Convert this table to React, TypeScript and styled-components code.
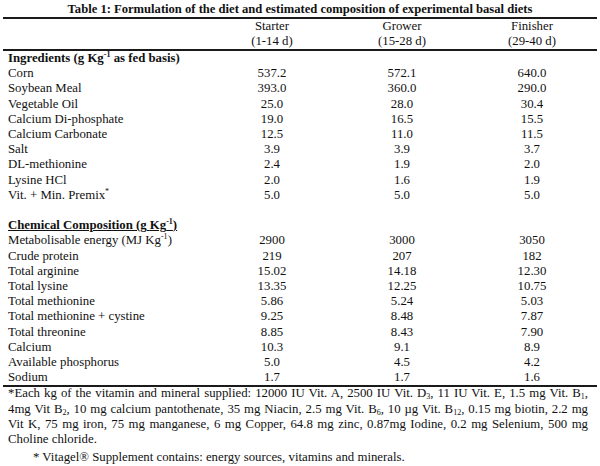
import React from "react";
import styled, { createGlobalStyle } from "styled-components";

const Global = createGlobalStyle`
  html, body { margin: 0; padding: 0; background: #fff; }
  body { font-family: "Liberation Serif", "Times New Roman", serif; color: #111; }
`;

const Page = styled.div`
  width: 600px;
  height: 466px;
  padding: 0 3px;
  box-sizing: border-box;
  overflow: hidden;
  font-family: "Liberation Serif", "Times New Roman", serif;
`;

const Title = styled.div`
  font-weight: bold;
  font-size: 12.6px;
  line-height: 16px;
  text-align: center;
  padding-top: 1px;
`;

const Table = styled.table`
  width: 594px;
  border-collapse: collapse;
  table-layout: fixed;
  font-family: "Liberation Serif", "Times New Roman", serif;
  font-size: 12.8px;
  border-top: 2px solid #1a1a1a;
  border-bottom: 2px solid #1a1a1a;
`;

const HeadRow = styled.tr<{ $last?: boolean }>`
  border-bottom: ${(p) => (p.$last ? "2px solid #1a1a1a" : "none")};
`;

const HeadCell = styled.th`
  font-weight: normal;
  text-align: center;
  line-height: 15px;
  height: 15px;
  padding: 0;
`;

const LabelCell = styled.td<{ $bold?: boolean; $underline?: boolean }>`
  padding: 0 0 0 5px;
  line-height: 15.2px;
  height: 15.2px;
  font-weight: ${(p) => (p.$bold ? "bold" : "normal")};
  text-decoration: ${(p) => (p.$underline ? "underline" : "none")};
  white-space: nowrap;
`;

const ValueCell = styled.td`
  padding: 0;
  line-height: 15.2px;
  text-align: center;
`;

const Sup = styled.sup`
  font-size: 8px;
  line-height: 0;
  vertical-align: 5px;
`;

const Sub = styled.sub`
  font-size: 8px;
  line-height: 0;
  vertical-align: -2px;
`;

const Notes = styled.div`
  font-size: 12.8px;
  padding: 0 9px 0 5px;
  margin-top: -1px;
`;

const NoteLine = styled.div<{ $justify?: boolean; $indent?: number; $gap?: number }>`
  line-height: 15.3px;
  height: 15.3px;
  text-align: left;
  text-align-last: ${(p) => (p.$justify ? "justify" : "left")};
  padding-left: ${(p) => p.$indent ?? 0}px;
  margin-top: ${(p) => p.$gap ?? 0}px;
  white-space: nowrap;
`;

const KgInv = () => (
  <>
    Kg<Sup>-1</Sup>
  </>
);

type Row =
  | { label: React.ReactNode; v: [string, string, string] }
  | { section: React.ReactNode; underline?: boolean }
  | { blank: true };

const rows: Row[] = [
  { section: <>Ingredients (g <KgInv /> as fed basis)</> },
  { label: "Corn", v: ["537.2", "572.1", "640.0"] },
  { label: "Soybean Meal", v: ["393.0", "360.0", "290.0"] },
  { label: "Vegetable Oil", v: ["25.0", "28.0", "30.4"] },
  { label: "Calcium Di-phosphate", v: ["19.0", "16.5", "15.5"] },
  { label: "Calcium Carbonate", v: ["12.5", "11.0", "11.5"] },
  { label: "Salt", v: ["3.9", "3.9", "3.7"] },
  { label: "DL-methionine", v: ["2.4", "1.9", "2.0"] },
  { label: "Lysine HCl", v: ["2.0", "1.6", "1.9"] },
  { label: <>Vit. + Min. Premix<Sup>*</Sup></>, v: ["5.0", "5.0", "5.0"] },
  { blank: true },
  { section: <>Chemical Composition (g <KgInv />)</>, underline: true },
  { label: <>Metabolisable energy (MJ <KgInv />)</>, v: ["2900", "3000", "3050"] },
  { label: "Crude protein", v: ["219", "207", "182"] },
  { label: "Total arginine", v: ["15.02", "14.18", "12.30"] },
  { label: "Total lysine", v: ["13.35", "12.25", "10.75"] },
  { label: "Total methionine", v: ["5.86", "5.24", "5.03"] },
  { label: "Total methionine + cystine", v: ["9.25", "8.48", "7.87"] },
  { label: "Total threonine", v: ["8.85", "8.43", "7.90"] },
  { label: "Calcium", v: ["10.3", "9.1", "8.9"] },
  { label: "Available phosphorus", v: ["5.0", "4.5", "4.2"] },
  { label: "Sodium", v: ["1.7", "1.7", "1.6"] },
];

export default function App() {
  return (
    <Page>
      <Global />
      <Title>Table 1: Formulation of the diet and estimated composition of experimental basal diets</Title>
      <Table>
        <colgroup>
          <col style={{ width: 204 }} />
          <col style={{ width: 130 }} />
          <col style={{ width: 130 }} />
          <col style={{ width: 130 }} />
        </colgroup>
        <thead>
          <HeadRow>
            <HeadCell />
            <HeadCell>Starter</HeadCell>
            <HeadCell>Grower</HeadCell>
            <HeadCell>Finisher</HeadCell>
          </HeadRow>
          <HeadRow $last>
            <HeadCell />
            <HeadCell>(1-14 d)</HeadCell>
            <HeadCell>(15-28 d)</HeadCell>
            <HeadCell>(29-40 d)</HeadCell>
          </HeadRow>
        </thead>
        <tbody>
          {rows.map((r, i) => {
            if ("blank" in r)
              return (
                <tr key={i}>
                  <LabelCell>&nbsp;</LabelCell>
                  <ValueCell />
                  <ValueCell />
                  <ValueCell />
                </tr>
              );
            if ("section" in r)
              return (
                <tr key={i}>
                  <LabelCell $bold $underline={r.underline}>{r.section}</LabelCell>
                  <ValueCell />
                  <ValueCell />
                  <ValueCell />
                </tr>
              );
            return (
              <tr key={i}>
                <LabelCell>{r.label}</LabelCell>
                {r.v.map((v, j) => (
                  <ValueCell key={j}>{v}</ValueCell>
                ))}
              </tr>
            );
          })}
        </tbody>
      </Table>
      <Notes>
        <NoteLine $justify>
          *Each kg of the vitamin and mineral supplied: 12000 IU Vit. A, 2500 IU Vit. D<Sub>3</Sub>, 11 IU Vit. E, 1.5 mg Vit. B<Sub>1</Sub>,
        </NoteLine>
        <NoteLine $justify>
          4mg Vit B<Sub>2</Sub>, 10 mg calcium pantothenate, 35 mg Niacin, 2.5 mg Vit. B<Sub>6</Sub>, 10 µg Vit. B<Sub>12</Sub>, 0.15 mg biotin, 2.2 mg
        </NoteLine>
        <NoteLine $justify>
          Vit K, 75 mg iron, 75 mg manganese, 6 mg Copper, 64.8 mg zinc, 0.87mg Iodine, 0.2 mg Selenium, 500 mg
        </NoteLine>
        <NoteLine>Choline chloride.</NoteLine>
        <NoteLine $indent={25} $gap={2}>
          * Vitagel® Supplement contains: energy sources, vitamins and minerals.
        </NoteLine>
      </Notes>
    </Page>
  );
}
